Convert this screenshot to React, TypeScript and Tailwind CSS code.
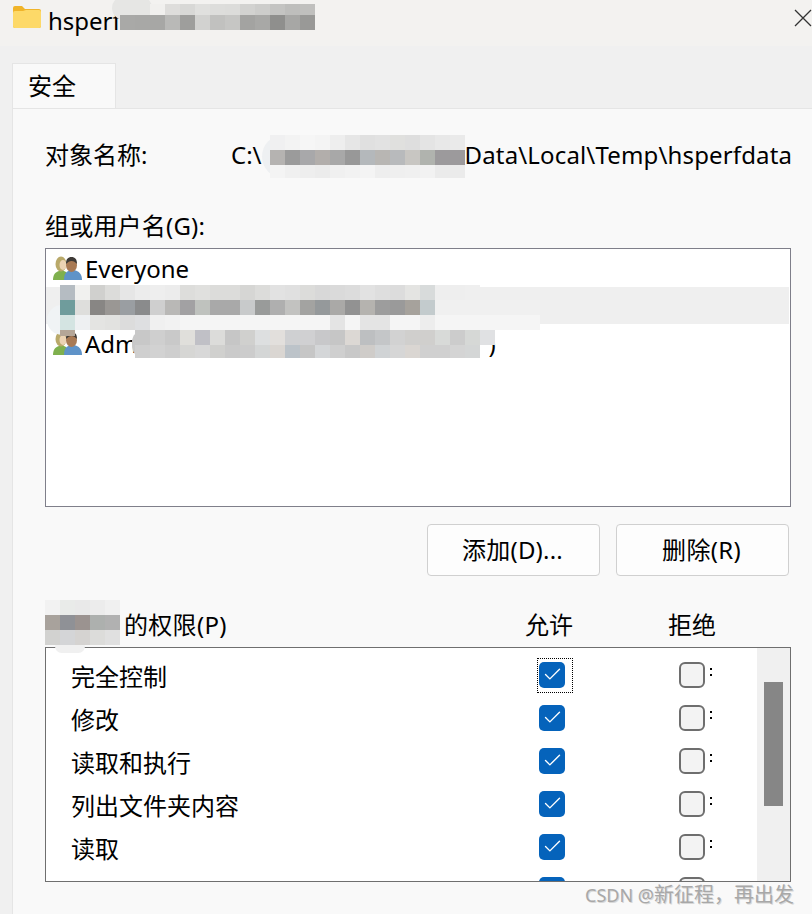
import { Check } from "lucide-react";

type Row = { h: number; x?: number; cells: string[] };

// pixelated redaction patches, 15px per cell
function Mosaic({ left, top, rows }: { left: number; top: number; rows: Row[] }) {
  return (
    <div className="absolute" style={{ left, top }}>
      {rows.map((row, i) => (
        <div key={i} className="flex" style={{ height: row.h, marginLeft: row.x ?? 0 }}>
          {row.cells.map((c, j) => (
            <div key={j} className="w-[15px] shrink-0" style={{ background: c }} />
          ))}
        </div>
      ))}
    </div>
  );
}

function repeat(c: string, n: number) {
  return Array.from({ length: n }, () => c);
}

function FolderIcon() {
  return (
    <svg width="28" height="22" viewBox="0 0 28 22">
      <path d="M0 2a2 2 0 0 1 2-2h7l3 3h14a2 2 0 0 1 2 2v15a2 2 0 0 1-2 2H2a2 2 0 0 1-2-2z" fill="#f0b429" />
      <path d="M0 7a2 2 0 0 1 2-2h8l3-1h13a2 2 0 0 1 2 2v14a2 2 0 0 1-2 2H2a2 2 0 0 1-2-2z" fill="#fdd968" />
    </svg>
  );
}

function UsersIcon() {
  return (
    <svg width="29" height="26" viewBox="0 0 29 26" className="shrink-0">
      <path d="M0 25c0-5 2-8 6-9l3-1 4 2 3 8z" fill="#7fb04e" />
      <ellipse cx="8" cy="9" rx="5.500" ry="7.500" fill="#b9a96a" />
      <ellipse cx="10" cy="10" rx="3.500" ry="5" fill="#ecd3b4" />
      <path d="M11 25c0-6 2-9 7-10h3c5 1 8 4 8 10z" fill="#5f93c8" />
      <ellipse cx="18.500" cy="10" rx="5.500" ry="7" fill="#a97a54" />
      <path d="M13 9c0-5 2-7 5.500-7S24 4 24 9c-2-2-3-3-5.500-3-2 0-3.500 1-5.500 3z" fill="#3e3a36" />
    </svg>
  );
}

function PermissionRow({ name, focused }: { name: string; focused?: boolean }) {
  return (
    <div className="flex h-[43px] shrink-0 items-center">
      <span className="relative top-[2px] w-[468px] text-[24px] leading-[32px]">{name}</span>
      <div className="relative flex h-[26px] w-[26px] items-center justify-center rounded-[5px] bg-[#0563bb]">
        <Check size={21} strokeWidth={1.600} className="text-white" />
        {focused && (
          <div className="absolute top-[-4px] left-[-2px] h-[35px] w-[36px] border border-dotted border-black" />
        )}
      </div>
      <div className="relative ml-[114px] h-[26px] w-[26px] rounded-[6px] border-2 border-[#6e6e6e] bg-[#f3f3f3]">
        <div className="absolute top-[4px] left-[29px] h-[2px] w-[2px] bg-black" />
        <div className="absolute top-[10px] left-[29px] h-[2px] w-[2px] bg-black" />
      </div>
    </div>
  );
}

export default function App() {
  return (
    <div className="relative flex h-[914px] w-[812px] flex-col overflow-hidden bg-[#f0f0f0] font-['Noto_Sans','Noto_Sans_CJK_SC',sans-serif] text-black">
      {/* Title bar */}
      <div className="flex h-[46px] shrink-0 items-start bg-[#f3f2f0] pt-[6px] pl-[13px]">
        <FolderIcon />
        <span className="ml-[7px] text-[24px] leading-[30px]">hsperf</span>
        <svg width="18" height="18" viewBox="0 0 18 18" className="absolute top-[9px] left-[794px]">
          <path d="M1 1l16 16M17 1L1 17" stroke="#333" strokeWidth="1.300" fill="none" />
        </svg>
      </div>

      {/* Tabs */}
      <div className="h-[62px] shrink-0 pt-[17px] pl-[12px]">
        <div className="flex h-[46px] w-[104px] items-start border border-b-0 border-[#e5e5e5] bg-[#f9f9f9] pt-[6px] pl-[15px] text-[24px] leading-[32px]">
          安全
        </div>
      </div>

      {/* Security panel */}
      <div className="ml-[12px] flex-1 border-t border-l border-[#e5e5e5] bg-[#f9f9f9] pl-[32px]">
        <div className="mt-[26px] flex h-[40px] items-center text-[24px] leading-[32px]">
          <span className="w-[186px]">对象名称:</span>
          <span>C:\</span>
          <span className="ml-[203px] tracking-[0.15px]">Data\Local\Temp\hsperfdata</span>
        </div>

        <div className="mt-[35px] h-[32px] text-[24px] leading-[32px] tracking-[0.2px]">组或用户名(G):</div>

        <div className="mt-[6px] h-[259px] w-[746px] border border-[#7f7f8a] bg-white text-[24px]">
          <div className="flex h-[38px] items-center pl-[7px]">
            <UsersIcon />
            <span className="relative top-[1px] ml-[3px] leading-[32px]">Everyone</span>
          </div>
          <div className="h-[37px] w-[743px] bg-[#efefef]" />
          <div className="flex h-[38px] items-center pl-[7px]">
            <UsersIcon />
            <span className="relative top-[1px] ml-[3px] leading-[32px]">Adm</span>
            <span className="relative top-[1px] ml-[351px] leading-[32px]">)</span>
          </div>
        </div>

        <div className="mt-[17px] flex w-[744px] justify-end gap-[16px] text-[24px]">
          <button className="h-[52px] w-[173px] rounded-[4px] border border-[#d0d0d0] bg-[#fdfdfd] pr-[2px] tracking-[0.2px]">添加(D)...</button>
          <button className="h-[52px] w-[173px] rounded-[4px] border border-[#d0d0d0] bg-[#fdfdfd] pr-[2px] tracking-[0.3px]">删除(R)</button>
        </div>

        <div className="mt-[32px] flex h-[34px] items-center text-[24px] leading-[32px]">
          <span className="w-[480px] pl-[79px] tracking-[0.3px]">的权限(P)</span>
          <span className="w-[48px]">允许</span>
          <span className="ml-[95px] w-[48px]">拒绝</span>
        </div>

        <div className="mt-[5px] flex h-[235px] w-[746px] overflow-hidden border border-[#6f6f6f] bg-white">
          <div className="flex min-w-0 flex-1 flex-col overflow-hidden pt-[5px] pl-[25px]">
            <PermissionRow name="完全控制" focused />
            <PermissionRow name="修改" />
            <PermissionRow name="读取和执行" />
            <PermissionRow name="列出文件夹内容" />
            <PermissionRow name="读取" />
            <PermissionRow name="写入" />
          </div>
          <div className="w-[33px] shrink-0 bg-[#f0f0f0] pt-[34px] pl-[7px]">
            <div className="h-[124px] w-[19px] bg-[#868686]" />
          </div>
        </div>
      </div>

      {/* Soft edges around the redactions */}
      <div className="absolute top-[-4px] left-[112px] h-[24px] w-[40px] rounded-full bg-[#e6e6e4]" />
      <div className="absolute top-[135px] left-[262px] h-[43px] w-[24px] rounded-l-full bg-[#eef0f2]" />
      <div className="absolute top-[305px] left-[47px] h-[30px] w-[20px] rounded-l-full bg-[#f0f3f5]" />
      <div className="absolute top-[330px] left-[60px] h-[6px] w-[15px] bg-[#b5a697]" />
      <div className="absolute top-[330px] left-[132px] h-[28px] w-[12px] rounded-l-full bg-[#c8c8c8]" />
      <div className="absolute top-[640px] left-[55px] h-[13px] w-[30px] rounded-full bg-[#f0f0f0]" />

      {/* Redacted patches */}
      <Mosaic
        left={150}
        top={4}
        rows={[
          { h: 11, cells: ["#f1f0ee", "#dedddb", "#d8d8d6", "#e0e0de", "#dddddb", "#dcdcda", "#d2d2d0", "#cdcdcb", "#c4c4c2", "#bebebc", "#c0c0be"] },
        ]}
      />
      <Mosaic
        left={120}
        top={15}
        rows={[
          { h: 15, cells: ["#a9a9a7", "#a8a8a6", "#a7a7a5", "#b9b9b7", "#9e9e9c", "#d2d2d0", "#c1c1bf", "#c6c6c4", "#a3a3a1", "#a8a8a6", "#8f8f8d", "#a7a7a5", "#999997"] },
        ]}
      />
      <Mosaic
        left={270}
        top={135}
        rows={[
          { h: 15, cells: ["#f0f0f1", "#f3f3f3", "#f6f6f6", "#f4f4f4", "#eeeeee", "#e6e6e6", "#e0e0e0", "#e2e2e2", "#e0e0de", "#dedede", "#e4e4e4", "#e8e8e8", "#eaeaea"] },
          { h: 15, cells: ["#b5b3b1", "#9b9b9b", "#a8a8aa", "#b2aeab", "#a8a8a8", "#989898", "#b4b8bb", "#b8b6b3", "#b8babc", "#c8c6c2", "#b0b3ae", "#9c9a9c", "#9c9a9c"] },
          { h: 13, cells: ["#f4f4f4", "#f0f0f0", "#eeeeee", "#ececec", "#f0f0f0", "#f2f2f2", "#f4f4f4", "#eeeeee", "#efefef", "#f0f0f0", "#f2f2f2", "#ebebeb", "#ebebeb"] },
        ]}
      />
      <Mosaic
        left={60}
        top={285}
        rows={[
          {
            h: 15,
            cells: ["#b5bcc2", "#f1f1ef", "#d0d0ce", "#dcdcda", "#e6e6e6", "#ececec", "#eeeeee", "#ececec", "#dddddb", "#e0e0de", "#dcdcda", "#dcdcda", "#d6d6d4", "#dcdcda", "#e2e2e2", "#e0e0e0", "#dcdcda", "#d8d8d8", "#dadada", "#dcdcdc", "#e2e2e2", "#dedede", "#dcdcdc", "#e4e4e2", "#d8dbdb", "#eeeeee", "#eeeeee", "#efefef"],
          },
          {
            h: 15,
            cells: ["#6f9c9c", "#dededc", "#888684", "#9a9794", "#9a9ea2", "#8a8b8c", "#cfcfcf", "#b9b8b6", "#a2a1a3", "#bfc2be", "#a9a9a9", "#a9a9a9", "#c8cacb", "#999b9a", "#afafaf", "#c2c2c0", "#a3a3a1", "#95999b", "#aaa9a7", "#929292", "#b5b3af", "#9d9d9d", "#9a9a9a", "#a6a29c", "#c3cbcd", ...repeat("#f0f0f0", 7)],
          },
          {
            h: 15,
            cells: ["#d4e4e2", "#eef0f2", "#e4e4e2", "#e2e2e0", "#dcdcdc", "#dedfe1", "#f0f0f0", "#f2f2f2", ...repeat("#f5f5f5", 10), "#e4e4e4", "#f5f5f5", "#e4e4e4", "#e4e4e4", "#f5f5f5", "#f5f5f5", "#ededed", ...repeat("#f5f5f5", 7)],
          },
        ]}
      />
      <Mosaic
        left={135}
        top={330}
        rows={[
          {
            h: 15,
            cells: ["#c8c8c8", "#cfcfcf", "#c9c9c9", "#e0dfdb", "#c0c0c6", "#dcdcda", "#c6c6c6", "#d0d0ce", "#dddfe0", "#e2dfdc", "#cfd0d2", "#d0d0d2", "#c8c8ca", "#c6c6c6", "#dcd8d4", "#bdbfc1", "#c4c6c8", "#d2d2d2", "#d0cfcd", "#d0cfcd", "#d8dad8", "#cccccc", "#d6d8d6", "#cbc9cb"],
          },
          {
            h: 13,
            cells: ["#cfcfcf", "#d2d2d2", "#cecece", "#d6d6d4", "#d8d8d8", "#d0d0ce", "#cacaca", "#cccccc", "#d4d6d6", "#dad6d2", "#bcc3c9", "#c6c6c6", "#d4d6d8", "#cfcfcf", "#c8c8c8", "#cfccc9", "#d0d3d5", "#d6d6d6", "#dad6d2", "#d0d0d0", "#d0d0d0", "#d4d4d4", "#d4d6d6"],
          },
        ]}
      />
      <div className="absolute top-[330px] left-[495px] h-[15px] w-0" />
      <Mosaic
        left={480}
        top={330}
        rows={[{ h: 15, cells: ["#e0e1e3"] }]}
      />
      <Mosaic
        left={45}
        top={600}
        rows={[
          { h: 15, cells: ["#f2f2f2", "#e9ebe9", "#e9e9e9", "#ececec", "#f0f0f0"] },
          { h: 15, cells: ["#a8a29c", "#8f9196", "#9b9390", "#adb0ae", "#b1b1b1"] },
          { h: 15, cells: ["#d2d2d0", "#d4d5d7", "#d5d3d1", "#dcdcda", "#e0e0e0"] },
        ]}
      />

      {/* CSDN watermark */}
      <div className="absolute top-[883px] left-[585px] flex items-baseline text-[20px] leading-[24px] whitespace-nowrap text-[#a8a8a8] [text-shadow:1px_1px_0_#d8d8d8]">
        <span className="text-[18px]">CSDN @</span>
        <span>新征程，再出发</span>
      </div>
    </div>
  );
}
